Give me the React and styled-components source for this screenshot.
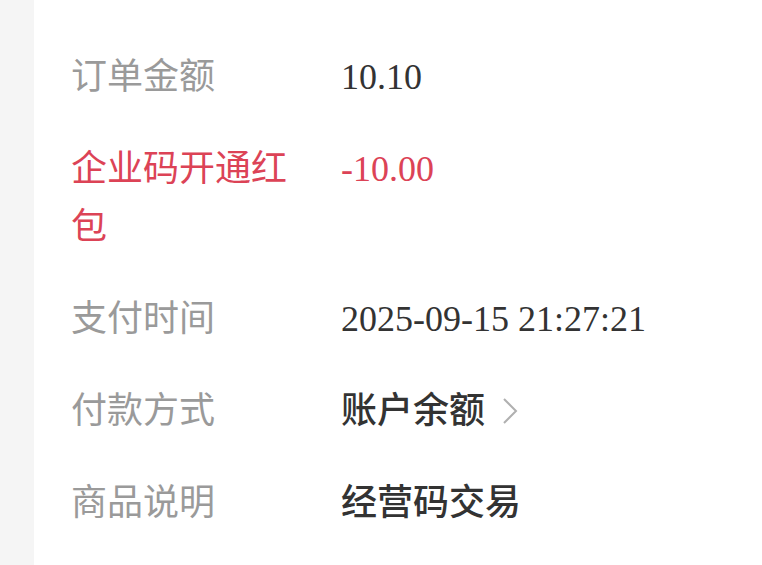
import React from "react";
import styled, { createGlobalStyle } from "styled-components";

const Global = createGlobalStyle`
  html, body { margin: 0; padding: 0; background: #ffffff; }
  body { font-family: "Liberation Serif", "Noto Sans CJK SC", serif; }
`;

const Page = styled.div`
  display: flex;
  min-height: 100vh;
  overflow: hidden;
`;

const Side = styled.div`
  width: 34px;
  flex: none;
  background: #f5f5f5;
`;

const List = styled.div`
  flex: 1;
  background: #ffffff;
  padding: 31px 0 0 37px;
`;

const Row = styled.div`
  display: flex;
  align-items: flex-start;
  padding: 17px 0;
  font-size: 36px;
  line-height: 58px;
`;

const Label = styled.div`
  width: 232px;
  margin-right: 38px;
  flex: none;
  color: ${(p) => (p.$red ? "#dc4356" : "#9a9a9a")};
`;

const Value = styled.div`
  display: flex;
  align-items: center;
  color: ${(p) => (p.$red ? "#dc4356" : "#333333")};
  font-weight: ${(p) => (p.$strong ? 500 : 400)};
`;

const Chevron = styled.svg`
  width: 18px;
  height: 28px;
  margin-left: 16px;
  flex: none;
`;

const rows = [
  { label: "订单金额", value: "10.10" },
  { label: "企业码开通红包", value: "-10.00", red: true },
  { label: "支付时间", value: "2025-09-15 21:27:21" },
  { label: "付款方式", value: "账户余额", strong: true, arrow: true },
  { label: "商品说明", value: "经营码交易", strong: true },
];

export default function App() {
  return (
    <>
      <Global />
      <Page>
        <Side />
        <List>
          {rows.map((r) => (
            <Row key={r.label}>
              <Label $red={r.red}>{r.label}</Label>
              <Value $red={r.red} $strong={r.strong}>
                {r.value}
                {r.arrow && (
                  <Chevron viewBox="0 0 18 28">
                    <polyline
                      points="3,2 15,14 3,26"
                      fill="none"
                      stroke="#b0b0b0"
                      strokeWidth="2"
                    />
                  </Chevron>
                )}
              </Value>
            </Row>
          ))}
        </List>
      </Page>
    </>
  );
}
